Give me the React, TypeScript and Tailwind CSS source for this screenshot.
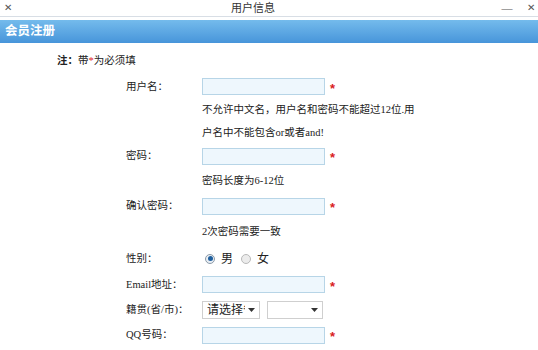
import type { ReactNode } from "react";

const font = {
  fontFamily: '"Liberation Serif", "Noto Sans CJK SC", serif',
};

function Star() {
  return (
    <span
      className="ml-[5px] mt-[3px] text-[13px] font-bold leading-none text-[#d91c1c]"
      style={{ fontFamily: '"Liberation Sans", sans-serif' }}
    >
      *
    </span>
  );
}

function TextInput() {
  return (
    <div className="h-[17px] w-[123px] border border-[#b7d5e7] bg-[#eef7fd]" />
  );
}

function Row({ label, h, children }: { label?: string; h: number; children?: ReactNode }) {
  return (
    <div className="flex items-center" style={{ height: h }}>
      <div className="w-[76px] shrink-0 whitespace-nowrap">{label}</div>
      <div className="flex items-center">{children}</div>
    </div>
  );
}

function Radio({ checked }: { checked?: boolean }) {
  return (
    <span
      className={`flex h-[10px] w-[10px] items-center justify-center rounded-full border ${
        checked ? "border-[#8c9aa8] bg-[#e8eef4]" : "border-[#b9b9b9] bg-[#ececec]"
      }`}
    >
      {checked && <span className="h-[5px] w-[5px] rounded-full bg-[#1f5f9e]" />}
    </span>
  );
}

function Select({ text, w }: { text?: string; w: number }) {
  return (
    <div
      className="flex h-[18px] items-center border border-[#cfcfcf] bg-white"
      style={{ width: w }}
    >
      <span className="w-[42px] overflow-hidden whitespace-nowrap pl-[4px] text-[12px] leading-[16px]">
        {text}
      </span>
      <svg width="7" height="4" viewBox="0 0 7 4" className="ml-auto mr-[4px] shrink-0">
        <path d="M0 0h7L3.5 4z" fill="#333" />
      </svg>
    </div>
  );
}

export default function App() {
  return (
    <div className="h-[350px] w-[538px] overflow-hidden bg-white text-[10.5px] text-[#222]" style={font}>
      {/* title bar */}
      <div className="flex h-[17px] items-center border-b border-[#d8dee5] text-[11px] text-[#333]">
        <span className="w-[16px] text-center text-[10px] leading-none text-[#555]">✕</span>
        <span className="flex-1 pr-[9px] text-center leading-none">用户信息</span>
        <span className="w-[16px] text-center leading-none text-[#555]">—</span>
        <span className="ml-[9px] w-[14px] text-center text-[10px] leading-none text-[#555]">✕</span>
      </div>

      {/* header */}
      <div className="mt-[3px] flex h-[23px] items-center bg-gradient-to-b from-[#74bbec] to-[#4795da] pl-[5px] text-[12.5px] font-bold text-white">
        会员注册
      </div>

      {/* note */}
      <div className="mt-[6px] flex h-[24px] items-center pl-[57px]">
        <span className="font-semibold">注：</span>带<span className="text-[#e01a1a]">*</span>为必须填
      </div>

      <div className="mt-[2px] pl-[126px]">
        <Row label="用户名：" h={23}>
          <TextInput />
          <Star />
        </Row>
        <Row h={23}>不允许中文名，用户名和密码不能超过12位.用</Row>
        <Row h={23}>户名中不能包含or或者and!</Row>
        <Row label="密码：" h={24}>
          <TextInput />
          <Star />
        </Row>
        <Row h={25}>密码长度为6-12位</Row>
        <Row label="确认密码：" h={26}>
          <TextInput />
          <Star />
        </Row>
        <Row h={26}>2次密码需要一致</Row>
        <Row label="性别：" h={27}>
          <span className="ml-[3px]">
            <Radio checked />
          </span>
          <span className="ml-[6px] text-[12px]">男</span>
          <span className="ml-[8px]">
            <Radio />
          </span>
          <span className="ml-[6px] text-[12px]">女</span>
        </Row>
        <Row label="Email地址：" h={25}>
          <TextInput />
          <Star />
        </Row>
        <Row label="籍贯(省/市)：" h={25}>
          <Select text="请选择省份" w={58} />
          <span className="ml-[7px]">
            <Select w={56} />
          </span>
        </Row>
        <Row label="QQ号码：" h={26}>
          <TextInput />
          <Star />
        </Row>
      </div>
    </div>
  );
}
